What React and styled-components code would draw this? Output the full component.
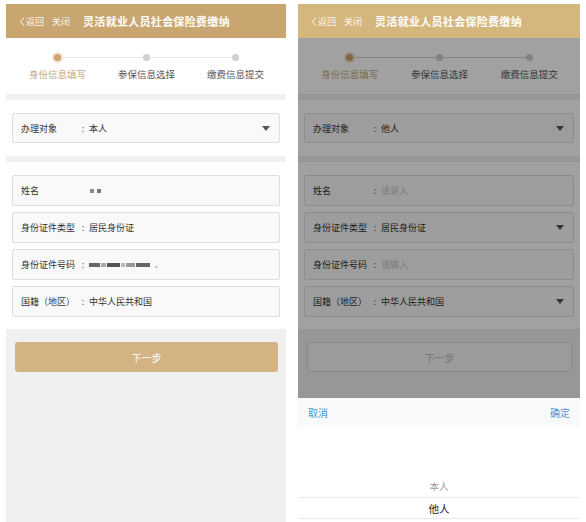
import React from "react";
import styled, { createGlobalStyle, css } from "styled-components";

const Global = createGlobalStyle`
  html, body { margin: 0; padding: 0; background: #fff; }
  body { font-family: "Noto Sans CJK SC", "Noto Sans", "Liberation Sans", sans-serif; }
  * { box-sizing: border-box; }
`;

const Page = styled.div`
  display: flex;
  gap: 12px;
  padding: 4px 0 0 6px;
  height: 522px;
`;

const Phone = styled.div`
  position: relative;
  width: ${(p) => p.$w}px;
  height: 518px;
  overflow: hidden;
  background: #fff;
  display: flex;
  flex-direction: column;
`;

const Header = styled.div`
  position: relative;
  z-index: 2;
  height: 34px;
  flex: none;
  background: ${(p) => p.$bg};
  display: flex;
  align-items: center;
  padding-left: 13px;
  color: #fff;
`;

const NavLink = styled.span`
  display: inline-flex;
  align-items: center;
  font-size: 9px;
  line-height: 1;
  color: rgba(255, 255, 255, 0.92);
  margin-right: ${(p) => p.$mr}px;
`;

const Title = styled.span`
  font-size: 11px;
  font-weight: 700;
  letter-spacing: 0.3px;
  line-height: 1;
`;

const Steps = styled.div`
  position: relative;
  flex: none;
  height: 56px;
  display: grid;
  grid-template-columns: repeat(3, 1fr);
  padding: 14px 6px 0 7px;
`;

const StepLine = styled.div`
  position: absolute;
  top: 19px;
  left: calc(7px + 267px / 6);
  right: calc(6px + 267px / 6);
  height: 1px;
  background: ${(p) => p.$c};
`;

const Step = styled.div`
  position: relative;
  display: flex;
  flex-direction: column;
  align-items: center;
  gap: 5px;
`;

const DotBox = styled.div`
  width: 11px;
  height: 11px;
  display: flex;
  align-items: center;
  justify-content: center;
`;

const Dot = styled.div`
  width: 7px;
  height: 7px;
  border-radius: 50%;
  background: #cfcfcf;
  ${(p) =>
    p.$active &&
    css`
      background: #c9a46e;
      box-shadow: 0 0 0 2px #f1e4d0;
    `}
`;

const StepLabel = styled.div`
  font-size: 9.5px;
  line-height: 12px;
  white-space: nowrap;
  color: ${(p) => (p.$active ? "#c8a877" : "#555")};
`;

const Band = styled.div`
  flex: none;
  height: 6px;
  background: #f0f0f0;
`;

const Section = styled.div`
  flex: none;
  display: flex;
  flex-direction: column;
  gap: 6px;
  padding: 13px 6px ${(p) => p.$pb}px;
`;

const Field = styled.div`
  height: ${(p) => p.$h || 31}px;
  display: flex;
  align-items: center;
  background: #f9f9f9;
  border: 1px solid #dedede;
  border-radius: 2px;
  padding: 0 9px 0 8px;
  font-size: 9px;
  color: #333;
`;

const Label = styled.span`
  width: 57px;
  flex: none;
  white-space: nowrap;
`;

const Colon = styled.span`
  width: 10px;
  flex: none;
  text-align: center;
  color: #666;
`;

const Value = styled.span`
  flex: 1;
  margin-left: 1px;
  display: flex;
  align-items: center;
  color: ${(p) => (p.$placeholder ? "#c4c4c4" : "#333")};
`;

const Caret = styled.span`
  width: 0;
  height: 0;
  border-left: 4px solid transparent;
  border-right: 4px solid transparent;
  border-top: 5px solid #555;
`;

const Blots = styled.span`
  display: inline-flex;
  align-items: center;
  gap: ${(p) => p.$gap}px;
`;

const Blot = styled.i`
  display: block;
  width: ${(p) => p.$w}px;
  height: ${(p) => p.$h || 4}px;
  margin-top: ${(p) => p.$dy || 0}px;
  background: ${(p) => p.$c};
  filter: blur(0.3px);
`;

const Footer = styled.div`
  flex: 1;
  background: #f0f0f0;
  padding: 13px 8px 0 9px;
`;

const NextButton = styled.div`
  height: 30px;
  border-radius: 3px;
  display: flex;
  align-items: center;
  justify-content: center;
  font-size: 10px;
  ${(p) =>
    p.$disabled
      ? css`
          background: #f5f5f5;
          border: 1px solid #d8d8d8;
          color: #b8b8b8;
        `
      : css`
          background: #d3b283;
          color: #fff;
        `}
`;

const Dim = styled.div`
  position: absolute;
  left: 0;
  right: 0;
  top: 34px;
  bottom: 124px;
  background: rgba(0, 0, 0, 0.37);
  z-index: 1;
`;

const Picker = styled.div`
  position: absolute;
  left: 0;
  right: 0;
  bottom: 0;
  height: 124px;
  background: #fff;
  z-index: 2;
  display: flex;
  flex-direction: column;
`;

const PickerBar = styled.div`
  height: 29px;
  flex: none;
  background: #f8f9fa;
  display: flex;
  align-items: center;
  justify-content: space-between;
  padding: 0 10px;
  font-size: 10px;
  color: #4a9ad3;
`;

const PickerList = styled.div`
  flex: 1;
  padding-top: 48px;
`;

const PickerItem = styled.div`
  height: 22px;
  display: flex;
  align-items: center;
  justify-content: center;
  font-size: ${(p) => (p.$selected ? 10.5 : 9.5)}px;
  color: ${(p) => (p.$selected ? "#222" : "#999")};
  ${(p) =>
    p.$selected &&
    css`
      border-top: 1px solid #eaeaea;
      border-bottom: 1px solid #eaeaea;
    `}
`;

const Chevron = () => (
  <svg width="6" height="9" viewBox="0 0 6 9" style={{ marginRight: 1 }}>
    <path d="M5 0.8 L1.2 4.5 L5 8.2" fill="none" stroke="#fff" strokeWidth="1" />
  </svg>
);

const steps = ["身份信息填写", "参保信息选择", "缴费信息提交"];

function Screen({ width, headerBg, lineColor, target, fields, disabled, children }) {
  return (
    <Phone $w={width}>
      <Header $bg={headerBg}>
        <NavLink $mr={8}>
          <Chevron />
          返回
        </NavLink>
        <NavLink $mr={13}>关闭</NavLink>
        <Title>灵活就业人员社会保险费缴纳</Title>
      </Header>
      <Steps>
        <StepLine $c={lineColor} />
        {steps.map((s, i) => (
          <Step key={s}>
            <DotBox>
              <Dot $active={i === 0} />
            </DotBox>
            <StepLabel $active={i === 0}>{s}</StepLabel>
          </Step>
        ))}
      </Steps>
      <Band />
      <Section $pb={13}>
        <Field $h={30}>
          <Label>办理对象</Label>
          <Colon>:</Colon>
          <Value>{target}</Value>
          <Caret />
        </Field>
      </Section>
      <Band />
      <Section $pb={12}>
        {fields.map((f) => (
          <Field key={f.label}>
            <Label>{f.label}</Label>
            {f.colon !== false && <Colon>:</Colon>}
            <Value $placeholder={f.placeholder}>{f.value}</Value>
            {f.caret && <Caret />}
          </Field>
        ))}
      </Section>
      <Footer>
        <NextButton $disabled={disabled}>下一步</NextButton>
      </Footer>
      {children}
    </Phone>
  );
}

const leftFields = [
  {
    label: "姓名",
    colon: false,
    value: (
      <Blots $gap={3} style={{ marginLeft: 11 }}>
        <Blot $w={4} $c="#8a8a8a" />
        <Blot $w={4} $c="#777" />
      </Blots>
    ),
  },
  { label: "身份证件类型", value: "居民身份证" },
  {
    label: "身份证件号码",
    value: (
      <Blots $gap={1}>
        <Blot $w={11} $c="#666" />
        <Blot $w={5} $c="#aaa" />
        <Blot $w={13} $c="#555" />
        <Blot $w={4} $c="#bbb" />
        <Blot $w={9} $c="#999" />
        <Blot $w={14} $c="#666" />
        <Blot $w={3} $h={2} $dy={5} $c="#ccc" style={{ marginLeft: 4 }} />
      </Blots>
    ),
  },
  { label: "国籍（地区）", value: "中华人民共和国" },
];

const rightFields = [
  { label: "姓名", value: "请录入", placeholder: true },
  { label: "身份证件类型", value: "居民身份证", caret: true },
  { label: "身份证件号码", value: "请输入", placeholder: true },
  { label: "国籍（地区）", value: "中华人民共和国", caret: true },
];

export default function App() {
  return (
    <>
      <Global />
      <Page>
        <Screen
          width={280}
          headerBg="#c9a66f"
          lineColor="#e6e6e6"
          target="本人"
          fields={leftFields}
        />
        <Screen
          width={282}
          headerBg="#d5b67d"
          lineColor="#cfcfcf"
          target="他人"
          fields={rightFields}
          disabled
        >
          <Dim />
          <Picker>
            <PickerBar>
              <span>取消</span>
              <span>确定</span>
            </PickerBar>
            <PickerList>
              <PickerItem>本人</PickerItem>
              <PickerItem $selected>他人</PickerItem>
            </PickerList>
          </Picker>
        </Screen>
      </Page>
    </>
  );
}
